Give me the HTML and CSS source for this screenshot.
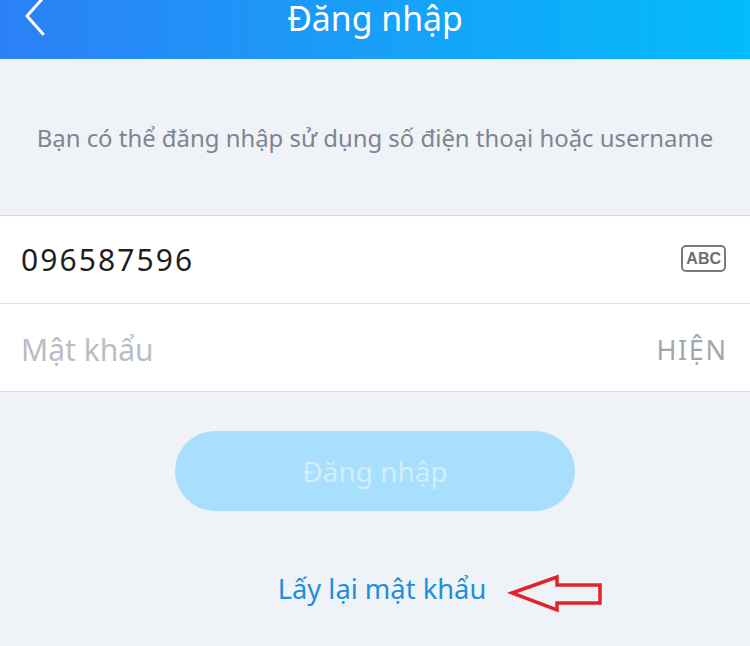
FILE: index.html
```html
<!DOCTYPE html>
<html lang="vi">
<head>
  <meta charset="UTF-8">
  <meta name="viewport" content="width=device-width, initial-scale=1.0">
  <title>Đăng nhập</title>
  <link rel="stylesheet" href="styles.css">
</head>
<body>
  <header class="topbar">
    <button class="back" aria-label="Quay lại">
      <svg width="22" height="36" viewBox="0 0 22 36">
        <polyline points="19,-2 3,16 19,34" fill="none" stroke="#fff" stroke-width="3" stroke-linecap="round" stroke-linejoin="round"/>
      </svg>
    </button>
    <h1 class="title">Đăng nhập</h1>
    <span></span>
  </header>

  <div class="hint">Bạn có thể đăng nhập sử dụng số điện thoại hoặc username</div>

  <div class="fields">
    <div class="row">
      <span class="value">096587596</span>
      <span class="kbd">ABC</span>
    </div>
    <div class="row">
      <span class="placeholder">Mật khẩu</span>
      <span class="toggle">HIỆN</span>
    </div>
  </div>

  <div class="actions">
    <button class="login" disabled>Đăng nhập</button>
  </div>

  <div class="forgot">
    <a href="#" class="link">Lấy lại mật khẩu</a>
    <svg class="arrow" width="105" height="45" viewBox="0 0 105 45">
      <polygon points="12,23 57,7 57,15 100,15 100,33 57,33 57,40" fill="none" stroke="#e2232a" stroke-width="3.5" stroke-linejoin="miter"/>
    </svg>
  </div>
</body>
</html>
```

FILE: styles.css
```css
body {
  margin: 0;
  font-family: "Noto Sans", Roboto, sans-serif;
  background-color: #eff3f7;
  height: 646px;
  overflow: hidden;
}
.topbar {
  height: 59px;
  display: grid;
  grid-template-columns: 80px 1fr 80px;
  align-items: start;
  background: linear-gradient(90deg, #2c80f6 0%, #16a2f8 55%, #03bcf8 100%);
}
.back {
  border: none;
  background: none;
  padding: 0 0 0 24px;
  margin: 0;
  height: 36px;
  display: flex;
  align-items: flex-start;
  cursor: pointer;
}
.title {
  margin: 0;
  text-align: center;
  color: #fff;
  font-weight: 400;
  font-size: 33.8px;
  line-height: 40px;
  margin-top: -2px;
}
.hint {
  height: 156px;
  display: flex;
  align-items: center;
  justify-content: center;
  color: #7d8591;
  font-size: 23.9px;
}
.fields {
  background: #fff;
  border-top: 1px solid #d9dcdf;
  border-bottom: 1px solid #d9dcdf;
}
.row {
  height: 87px;
  display: flex;
  align-items: center;
  justify-content: space-between;
  padding: 0 24px 0 21px;
}
.row + .row {
  border-top: 1px solid #dcdfe2;
}
.value {
  font-size: 30px;
  letter-spacing: 2.1px;
  color: #1f1f21;
}
.placeholder {
  font-size: 30px;
  color: #b9bdc3;
  margin-top: 4px;
}
.kbd {
  font-family: "Liberation Sans", Arial, sans-serif;
  font-size: 16px;
  font-weight: 700;
  color: #6e6e70;
  border: 2px solid #7a7a7c;
  border-radius: 5px;
  padding: 0 3px;
  line-height: 23px;
  margin-top: -2px;
}
.toggle {
  font-size: 27px;
  letter-spacing: 1.6px;
  margin-right: -1.6px;
  color: #a3a7ad;
  margin-top: 4px;
}
.actions {
  display: flex;
  justify-content: center;
  padding-top: 39px;
}
.login {
  width: 400px;
  height: 80px;
  border: none;
  border-radius: 40px;
  background-color: #a8dffc;
  color: #d2eefd;
  font-family: inherit;
  font-size: 28px;
}
.forgot {
  position: relative;
  display: flex;
  justify-content: center;
  padding: 60px 0 0 14px;
}
.link {
  color: #1e8fd9;
  font-size: 27.3px;
  text-decoration: none;
  line-height: 36px;
}
.arrow {
  position: absolute;
  left: 500px;
  top: 59px;
}
```
